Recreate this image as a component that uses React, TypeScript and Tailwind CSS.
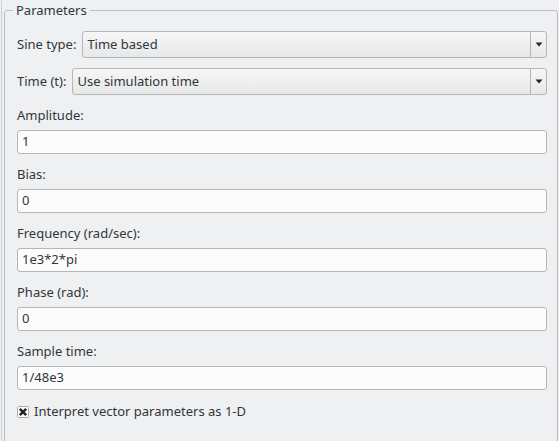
import React from "react";

const Combo = ({ value }: { value: string }) => (
  <div className="flex-1 h-[27px] flex items-stretch rounded-[3px] border border-[#b4b6b8] bg-linear-to-b from-[#f6f6f6] to-[#e7e8e9]">
    <div className="flex-1 flex items-center pl-[4px]">{value}</div>
    <div className="w-[16px] border-l border-[#b4b6b8] flex items-center justify-center">
      <svg width="8" height="5" viewBox="0 0 8 5">
        <path d="M0.5 0.5 H7.5 L4 4.5 Z" fill="#232627" />
      </svg>
    </div>
  </div>
);

const Field = ({ label, value }: { label: string; value: string }) => (
  <div className="flex flex-col mt-[11px]">
    <div className="h-[18px] leading-[18px]">{label}</div>
    <div className="mt-[6px] h-[24px] flex items-center pl-[4px] rounded-[3px] border border-[#b4b6b8] bg-[#fcfcfc]">
      {value}
    </div>
  </div>
);

export default function App() {
  return (
    <div
      className="w-[559px] h-[441px] overflow-hidden bg-[#eff0f1] text-[13px] text-[#31363b]"
      style={{ fontFamily: '"Noto Sans", "Open Sans", sans-serif' }}
    >
      <div className="h-full pl-[2px] pr-[1px] pt-[1px] ml-[1px] border-l border-[#d0d1d2]">
        <fieldset className="h-[460px] border border-[#bcbebf] rounded-[3px] pl-[12px] pr-[10px] pt-[12px]">
          <legend className="-ml-[4px] px-[3px] h-[18px] leading-[18px]">Parameters</legend>

          <div className="flex items-center gap-[6px]">
            <span>Sine type:</span>
            <Combo value="Time based" />
          </div>
          <div className="flex items-center gap-[6px] mt-[10px]">
            <span>Time (t):</span>
            <Combo value="Use simulation time" />
          </div>

          <Field label="Amplitude:" value="1" />
          <Field label="Bias:" value="0" />
          <Field label="Frequency (rad/sec):" value="1e3*2*pi" />
          <Field label="Phase (rad):" value="0" />
          <Field label="Sample time:" value="1/48e3" />

          <div className="flex items-center gap-[5px] mt-[13px] h-[18px]">
            <svg width="12" height="12" viewBox="0 0 12 12">
              <rect x="0.5" y="0.5" width="11" height="11" rx="1" fill="#fcfcfc" stroke="#a8aaac" />
              <path d="M2.8 2.8 L9.2 9.2 M9.2 2.8 L2.8 9.2" stroke="#232627" strokeWidth="2.6" />
            </svg>
            <span>Interpret vector parameters as 1-D</span>
          </div>
        </fieldset>
      </div>
    </div>
  );
}
